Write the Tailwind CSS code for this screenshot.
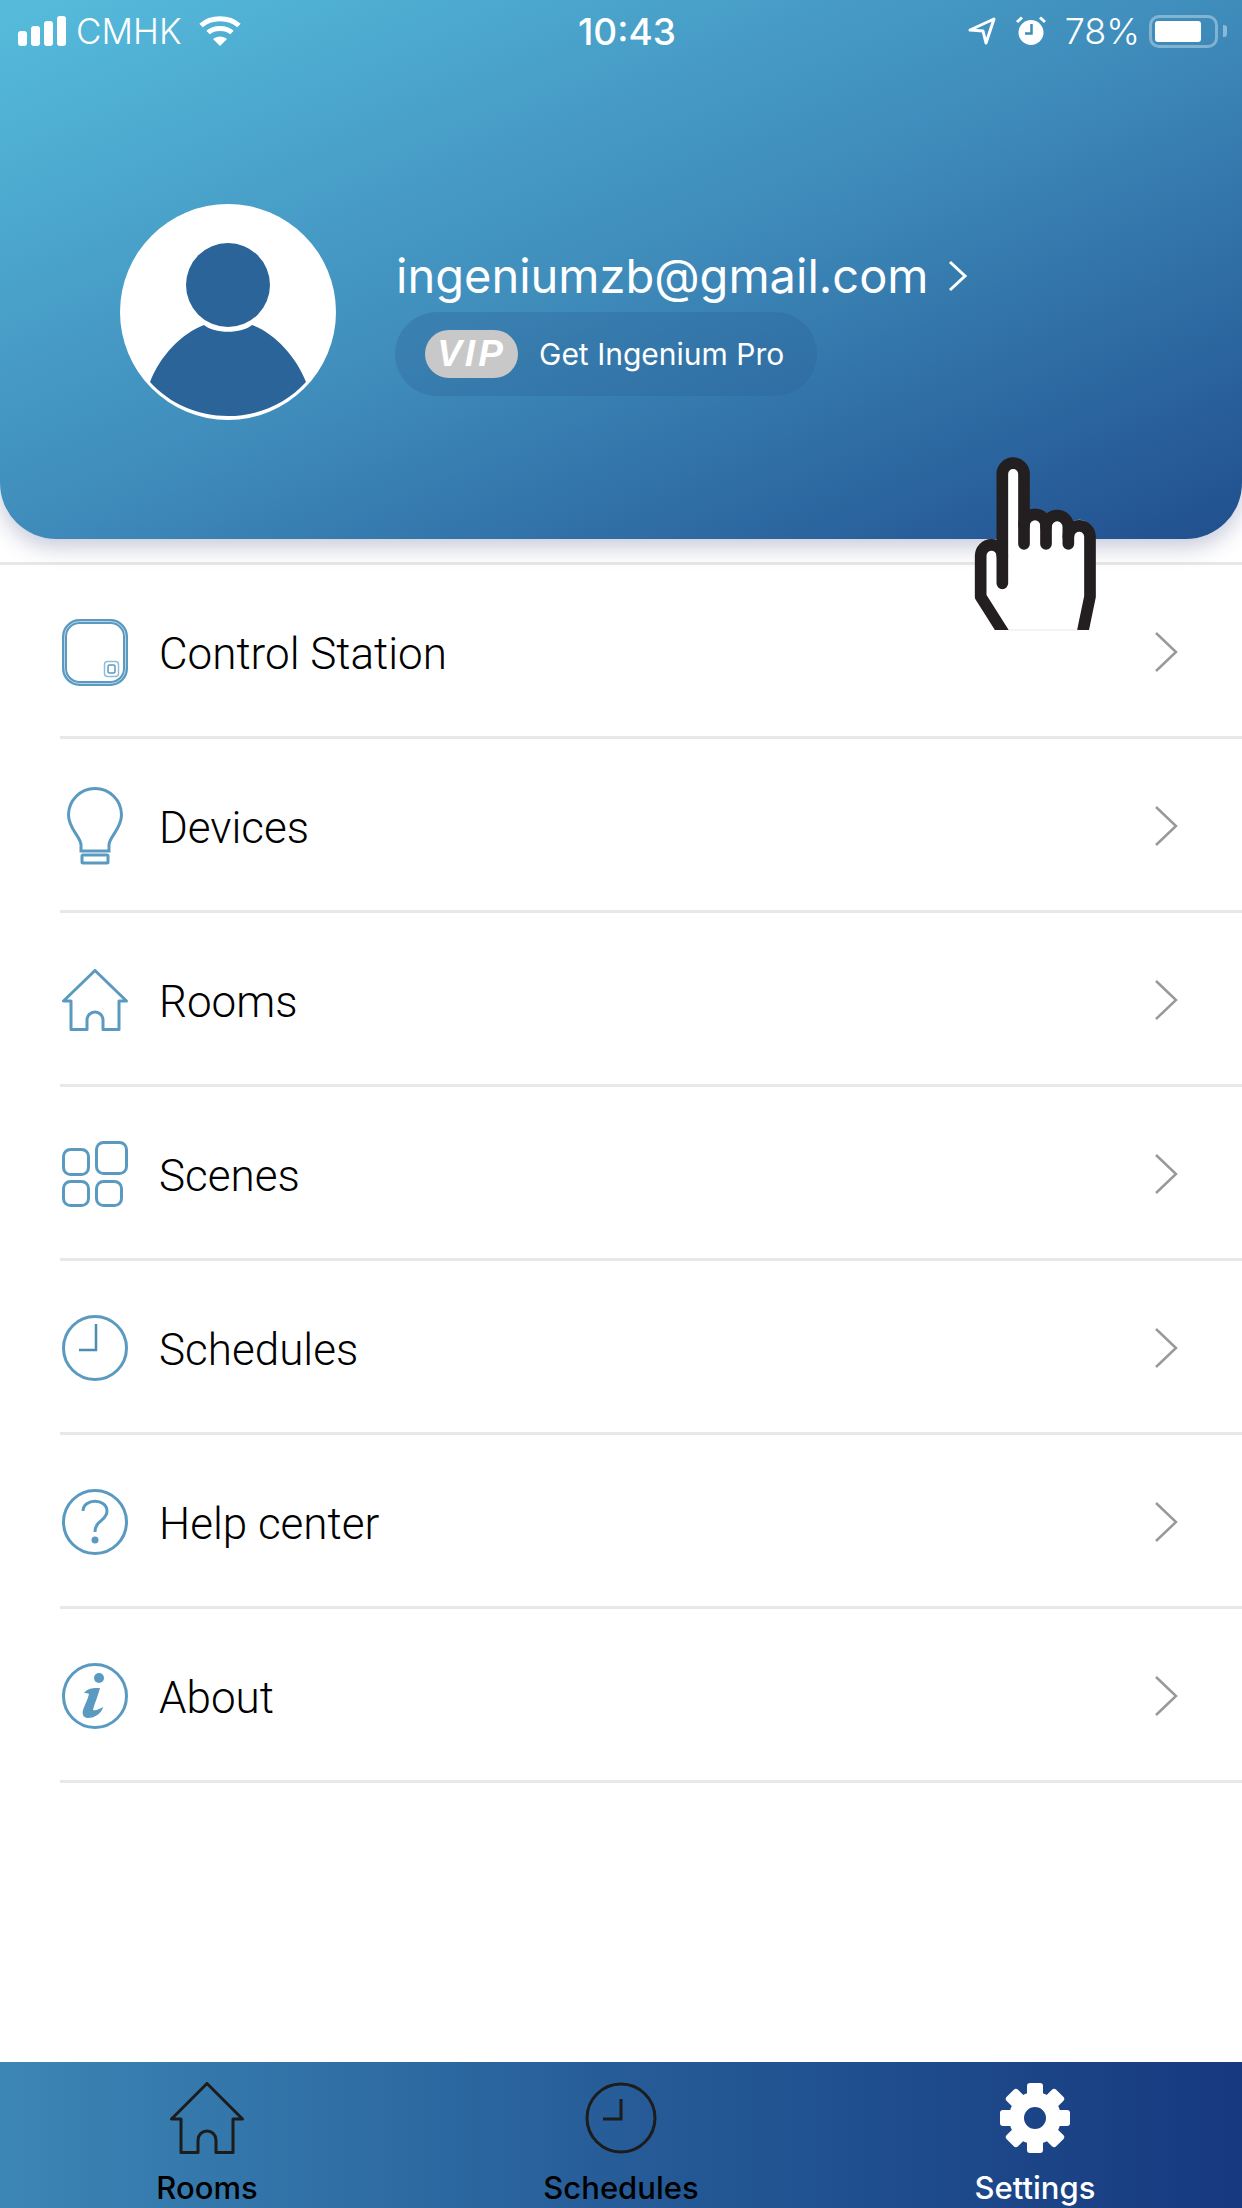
<!DOCTYPE html>
<html lang="en">

<head>
    <meta charset="UTF-8">
    <meta name="viewport" content="width=device-width, initial-scale=1.0">
    <script src="https://cdn.jsdelivr.net/npm/@tailwindcss/browser@4"></script>
    <title>Ingenium | Settings</title>
</head>

<body class="bg-white font-[family-name:Inter,sans-serif]">
    <div class="relative w-[1242px] h-[2208px] overflow-hidden flex flex-col bg-white">

        <!-- Header -->
        <header
            class="relative z-10 h-[539px] shrink-0 rounded-b-[56px] bg-linear-to-br from-[#56bcdc] via-[#3f8cbb] to-[#214f8e] shadow-[0_8px_22px_rgba(50,60,120,0.28)] text-white">
            <!-- Status bar -->
            <div class="h-[62px] pl-[18px] pr-[15px] flex items-center">
                <div class="w-[556px] flex items-center">
                    <div class="flex items-end gap-[4px] h-[30px]">
                        <span class="w-[9px] h-[15px] rounded-[3px] bg-white"></span>
                        <span class="w-[9px] h-[20px] rounded-[3px] bg-white"></span>
                        <span class="w-[9px] h-[25px] rounded-[3px] bg-white"></span>
                        <span class="w-[9px] h-[30px] rounded-[3px] bg-white"></span>
                    </div>
                    <span class="ml-[10px] text-[35px] font-light leading-none">CMHK</span>
                    <svg class="ml-[17px]" width="42" height="30" viewBox="0 0 42 30" fill="none" stroke="white"
                        stroke-width="5">
                        <path d="M2 9.500C12 .5 30 .5 40 9.500" />
                        <path d="M9 16.500C15 11 27 11 33 16.500" />
                        <path d="M21 30L14 23C18 19.500 24 19.500 28 23Z" fill="white" stroke="none" />
                    </svg>
                </div>
                <span class="w-[106px] text-center text-[37px] font-medium leading-none">10:43</span>
                <div class="ml-auto flex items-center">
                    <svg width="28" height="28" viewBox="0 0 28 28" fill="none" stroke="white" stroke-width="3"
                        stroke-linejoin="round">
                        <path d="M2 13L26 2L18 26L15 14Z" />
                    </svg>
                    <svg class="ml-[20px]" width="30" height="30" viewBox="0 0 30 30">
                        <circle cx="15" cy="16.500" r="12.500" fill="white" />
                        <path d="M1 6L6 1.500M29 6L24 1.500" stroke="white" stroke-width="3" />
                        <path d="M15.500 8V17.500H9" fill="none" stroke="#418bb8" stroke-width="2.500" />
                    </svg>
                    <span class="ml-[19px] text-[36px] font-light leading-none">78%</span>
                    <div class="ml-[9px] w-[69px] h-[33px] rounded-[10px] border-[3px] border-white/35 p-[3px]">
                        <div class="w-[46px] h-full rounded-[3px] bg-white"></div>
                    </div>
                    <span class="ml-[5px] w-[4px] h-[12px] rounded-r-[3px] bg-white/40"></span>
                </div>
            </div>

            <!-- Profile -->
            <div class="mt-[142px] pl-[120px] flex items-center gap-[60px]">
                <div class="w-[216px] h-[216px] shrink-0 rounded-full bg-white">
                    <svg width="216" height="216" viewBox="0 0 216 216">
                        <circle cx="108" cy="81" r="42" fill="#2b6499" />
                        <path d="M30 178C40 152 62 129 84 121C94 130 122 130 132 121C154 129 176 152 186 178C166 200 138 212 108 212C78 212 50 200 30 178Z"
                            fill="#2b6499" />
                    </svg>
                </div>
                <div class="flex flex-col items-start mt-[19px]">
                    <div class="flex items-center">
                        <span class="text-[47px] leading-[56px]">ingeniumzb@gmail.com</span>
                        <svg class="ml-[19px]" width="20" height="32" viewBox="0 0 20 32" fill="none" stroke="white"
                            stroke-width="3">
                            <path d="M2 2L17 16L2 30" />
                        </svg>
                    </div>
                    <div class="mt-[8px] h-[84px] w-[422px] -ml-[1px] rounded-full bg-[#2a5f95]/30 flex items-center pl-[30px]">
                        <span
                            class="w-[93px] h-[48px] rounded-full bg-[#c8c8c8] flex items-center justify-center text-[37px] tracking-[3px] font-bold italic font-[family-name:'Liberation_Sans',sans-serif]">VIP</span>
                        <span class="ml-[21px] mt-[2px] text-[30px]">Get Ingenium Pro</span>
                    </div>
                </div>
            </div>
        </header>

        <!-- Menu -->
        <main class="mt-[23px] flex-1 border-t-[3px] border-[#e8e8e8] text-black font-[family-name:Roboto,sans-serif]">
            <div class="ml-[60px] h-[174px] pt-[3px] border-b-[3px] border-[#e8e8e8] flex items-center">
                <svg class="ml-[2px]" width="66" height="67" viewBox="0 0 66 67" fill="none">
                    <rect x="2.500" y="2.500" width="61" height="62" rx="15" stroke="#5a9ac0" stroke-width="5" />
                    <rect x="2.500" y="2.500" width="61" height="62" rx="15" stroke="#cfe2ed" stroke-width="0.8" />
                    <rect x="42.500" y="42.500" width="14" height="15" rx="3" stroke="#8fbdd6" stroke-width="1.500" />
                    <rect x="46" y="46" width="7" height="8" rx="1.500" stroke="#5a9ac0" stroke-width="1.500" />
                </svg>
                <span class="ml-[31px] mt-[3px] text-[44px] font-light leading-none">Control Station</span>
                <svg class="ml-auto mr-[64px]" width="24" height="42" viewBox="0 0 24 42" fill="none" stroke="#999999"
                    stroke-width="2.500">
                    <path d="M2 2L22 21L2 40" />
                </svg>
            </div>
            <div class="ml-[60px] h-[174px] pt-[3px] border-b-[3px] border-[#e8e8e8] flex items-center">
                <svg class="ml-[7px]" width="56" height="78" viewBox="0 0 56 78" fill="none" stroke="#5a9ac0"
                    stroke-width="3">
                    <path d="M14 64V58C14 50 1.500 42 1.500 28A26.500 26.500 0 1 1 54.500 28C54.500 42 42 50 42 58V64Z" />
                    <rect x="15" y="68" width="26" height="8" rx="1" />
                </svg>
                <span class="ml-[36px] mt-[3px] text-[44px] font-light leading-none">Devices</span>
                <svg class="ml-auto mr-[64px]" width="24" height="42" viewBox="0 0 24 42" fill="none" stroke="#999999"
                    stroke-width="2.500">
                    <path d="M2 2L22 21L2 40" />
                </svg>
            </div>
            <div class="ml-[60px] h-[174px] pt-[3px] border-b-[3px] border-[#e8e8e8] flex items-center">
                <svg class="ml-[2px]" width="66" height="62" viewBox="0 0 66 62" fill="none" stroke="#5a9ac0"
                    stroke-width="3" stroke-linejoin="round">
                    <path d="M33 1.500L1.500 32H9V60.500H25V51A8 8 0 0 1 41 51V60.500H57V32H64.500Z" />
                </svg>
                <span class="ml-[31px] mt-[3px] text-[44px] font-light leading-none">Rooms</span>
                <svg class="ml-auto mr-[64px]" width="24" height="42" viewBox="0 0 24 42" fill="none" stroke="#999999"
                    stroke-width="2.500">
                    <path d="M2 2L22 21L2 40" />
                </svg>
            </div>
            <div class="ml-[60px] h-[174px] pt-[3px] border-b-[3px] border-[#e8e8e8] flex items-center">
                <svg class="ml-[2px]" width="66" height="66" viewBox="0 0 66 66" fill="none" stroke="#5a9ac0"
                    stroke-width="3">
                    <rect x="1.500" y="8.500" width="25" height="25" rx="7" />
                    <rect x="34.500" y="1.500" width="30" height="31" rx="7" />
                    <rect x="1.500" y="40.500" width="25" height="24" rx="7" />
                    <rect x="34.500" y="40.500" width="25" height="24" rx="7" />
                </svg>
                <span class="ml-[31px] mt-[3px] text-[44px] font-light leading-none">Scenes</span>
                <svg class="ml-auto mr-[64px]" width="24" height="42" viewBox="0 0 24 42" fill="none" stroke="#999999"
                    stroke-width="2.500">
                    <path d="M2 2L22 21L2 40" />
                </svg>
            </div>
            <div class="ml-[60px] h-[174px] pt-[3px] border-b-[3px] border-[#e8e8e8] flex items-center">
                <svg class="ml-[2px]" width="66" height="66" viewBox="0 0 66 66" fill="none" stroke="#5a9ac0"
                    stroke-width="3">
                    <circle cx="33" cy="33" r="31.500" />
                    <path d="M34 9V35H17" stroke="#4d8cb3" stroke-width="2.500" />
                </svg>
                <span class="ml-[31px] mt-[3px] text-[44px] font-light leading-none">Schedules</span>
                <svg class="ml-auto mr-[64px]" width="24" height="42" viewBox="0 0 24 42" fill="none" stroke="#999999"
                    stroke-width="2.500">
                    <path d="M2 2L22 21L2 40" />
                </svg>
            </div>
            <div class="ml-[60px] h-[174px] pt-[3px] border-b-[3px] border-[#e8e8e8] flex items-center">
                <svg class="ml-[2px]" width="66" height="66" viewBox="0 0 66 66" fill="none" stroke="#5a9ac0"
                    stroke-width="3">
                    <circle cx="33" cy="33" r="31.500" />
                    <path d="M21 22C21 9 45 9 45 22C45 32 33 31 33 43" />
                    <circle cx="33" cy="51" r="3.500" fill="#5a9ac0" stroke="none" />
                </svg>
                <span class="ml-[31px] mt-[3px] text-[44px] font-light leading-none">Help center</span>
                <svg class="ml-auto mr-[64px]" width="24" height="42" viewBox="0 0 24 42" fill="none" stroke="#999999"
                    stroke-width="2.500">
                    <path d="M2 2L22 21L2 40" />
                </svg>
            </div>
            <div class="ml-[60px] h-[174px] pt-[3px] border-b-[3px] border-[#e8e8e8] flex items-center">
                <svg class="ml-[2px]" width="66" height="66" viewBox="0 0 66 66" fill="none" stroke="#5a9ac0"
                    stroke-width="3">
                    <circle cx="33" cy="33" r="31.500" />
                    <circle cx="37" cy="15" r="5" fill="#5a9ac0" stroke="none" />
                    <path d="M22 30C27 24 33 25 38 25C36 33 32 42 31 47C34 48 37 46 41 44C40 50 33 55 26 55C21 55 20 51 21 47C23 41 26 36 27 31C26 30 24 30 22 30Z"
                        fill="#5a9ac0" stroke="none" />
                </svg>
                <span class="ml-[31px] mt-[3px] text-[44px] font-light leading-none">About</span>
                <svg class="ml-auto mr-[64px]" width="24" height="42" viewBox="0 0 24 42" fill="none" stroke="#999999"
                    stroke-width="2.500">
                    <path d="M2 2L22 21L2 40" />
                </svg>
            </div>
        </main>

        <!-- Tab bar -->
        <nav class="h-[146px] shrink-0 grid grid-cols-3 bg-linear-to-r from-[#3c86b5] via-[#265c98] to-[#17397f]">
            <div class="flex flex-col items-center pt-[20px]">
                <svg width="74" height="72" viewBox="0 0 74 72" fill="none" stroke="#1c1c1c" stroke-width="3"
                    stroke-linejoin="round">
                    <path d="M37 1.500L1.500 37H11V70.500H28V58A9 9 0 0 1 46 58V70.500H63V37H72.500Z" />
                </svg>
                <span class="mt-[18px] text-[31px] font-medium leading-none text-black">Rooms</span>
            </div>
            <div class="flex flex-col items-center pt-[20px]">
                <svg width="72" height="72" viewBox="0 0 72 72" fill="none" stroke="#1c1c1c" stroke-width="3">
                    <circle cx="36" cy="36" r="34" />
                    <path d="M36 17V37H18" />
                </svg>
                <span class="mt-[18px] text-[31px] font-medium leading-none text-black">Schedules</span>
            </div>
            <div class="flex flex-col items-center pt-[20px]">
                <svg width="72" height="72" viewBox="0 0 72 72" fill="white">
                    <circle cx="36" cy="36" r="18.500" fill="none" stroke="white" stroke-width="15" />
                    <rect x="28" y="1" width="16" height="16" rx="3" />
                    <rect x="28" y="1" width="16" height="16" rx="3" transform="rotate(45 36 36)" />
                    <rect x="28" y="1" width="16" height="16" rx="3" transform="rotate(90 36 36)" />
                    <rect x="28" y="1" width="16" height="16" rx="3" transform="rotate(135 36 36)" />
                    <rect x="28" y="1" width="16" height="16" rx="3" transform="rotate(180 36 36)" />
                    <rect x="28" y="1" width="16" height="16" rx="3" transform="rotate(225 36 36)" />
                    <rect x="28" y="1" width="16" height="16" rx="3" transform="rotate(270 36 36)" />
                    <rect x="28" y="1" width="16" height="16" rx="3" transform="rotate(315 36 36)" />
                </svg>
                <span class="mt-[18px] text-[31px] font-medium leading-none text-white">Settings</span>
            </div>
        </nav>

        <!-- Tap hint hand, lies over header and first row -->
        <svg class="absolute z-20 left-[940px] top-[440px]" width="170" height="200" viewBox="0 0 510 600">
            <defs>
                <clipPath id="hand-clip">
                    <rect width="510" height="570" />
                </clipPath>
            </defs>
            <g clip-path="url(#hand-clip)">
                <path d="M198 590L122 470V347A32.500 32.500 0 0 1 187 347V102A32.500 32.500 0 0 1 252 102V256A33 33 0 0 1 318 256A33.500 33.500 0 0 1 385 260A32.500 32.500 0 0 1 450 290V470L420 590Z"
                    fill="white" />
                <g fill="none" stroke="#231f20" stroke-width="35" stroke-linecap="round" stroke-linejoin="round">
                    <path d="M187 430V102A32.500 32.500 0 0 1 252 102V312" />
                    <path d="M187 347A32.500 32.500 0 0 0 122 347V470L198 590" />
                    <path d="M252 256A33 33 0 0 1 318 256V312" />
                    <path d="M318 260A33.500 33.500 0 0 1 385 260V312" />
                    <path d="M385 290A32.500 32.500 0 0 1 450 290V470L425 590" />
                </g>
            </g>
            <path d="M205 570H415" stroke="#cccccc" stroke-width="1.500" />
        </svg>
    </div>
</body>

</html>
